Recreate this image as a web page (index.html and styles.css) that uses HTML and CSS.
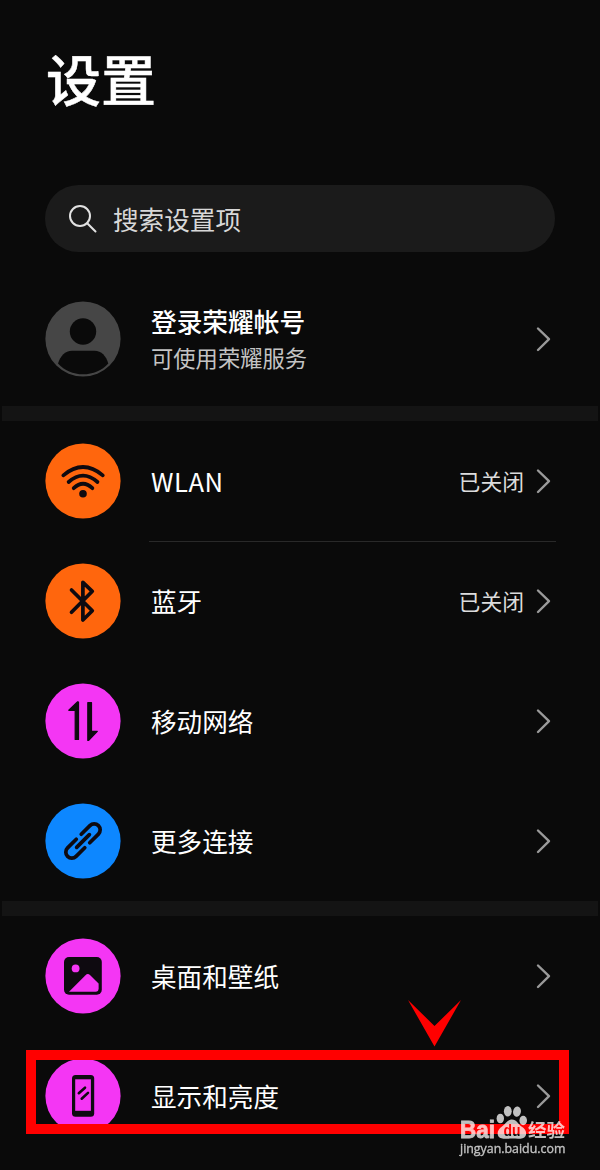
FILE: index.html
```html
<!DOCTYPE html>
<html lang="zh-CN">

<head>
  <meta charset="UTF-8">
  <meta name="viewport" content="width=device-width, initial-scale=1.0">
  <title>设置</title>
  <link rel="stylesheet" href="styles.css">
</head>

<body>
  <svg class="sprite">
    <symbol id="arrow" viewBox="0 0 16 26">
      <path d="M2 2.500l11 10.700L2 24" fill="none" stroke="currentColor" stroke-width="2.4" stroke-linecap="round" stroke-linejoin="round" />
    </symbol>
  </svg>

  <main class="settings">
    <h1>设置</h1>

    <div class="search">
      <svg class="search-icon" viewBox="0 0 30 30">
        <circle cx="12" cy="12" r="10" />
        <path d="M19.2 19.2l8.3 8.3" />
      </svg>
      <span>搜索设置项</span>
    </div>

    <section class="account">
      <svg class="icon gray" viewBox="0 0 76 76">
        <circle class="disc" cx="38" cy="38" r="37.6" />
        <circle cx="38" cy="30.5" r="13.2" />
        <path d="M13 62.5C15.500 55 20 49.800 27 49.800H49.500C56.500 49.800 61 55 63.300 62.500C57 69.700 48 73.300 38 73.300S19.500 69.700 13 62.500z" />
      </svg>
      <div class="account-text">
        <h2>登录荣耀帐号</h2>
        <p>可使用荣耀服务</p>
      </div>
      <svg class="arrow"><use href="#arrow" /></svg>
    </section>

    <section class="group">
      <div class="row line">
        <svg class="icon orange" viewBox="0 0 76 76">
          <circle class="disc" cx="38" cy="38" r="37.6" />
          <g class="stroke">
            <path d="M18.300 32.300Q38 15.700 57.800 32.300" />
            <path d="M23.600 39Q38 26.200 52.500 39" />
            <path d="M28.700 45.200Q38 36.400 47.400 45.200" />
          </g>
          <circle cx="38" cy="50.700" r="3.800" />
        </svg>
        <span class="name latin">WLAN</span>
        <span class="status">已关闭</span>
        <svg class="arrow"><use href="#arrow" /></svg>
      </div>
      <div class="row">
        <svg class="icon orange" viewBox="0 0 76 76">
          <circle class="disc" cx="38" cy="38" r="37.6" />
          <path class="stroke" d="M26.500 27L47.300 47.800L37.900 57V19.300L47.300 28.300L26.500 49.300" />
        </svg>
        <span class="name">蓝牙</span>
        <span class="status">已关闭</span>
        <svg class="arrow"><use href="#arrow" /></svg>
      </div>
      <div class="row">
        <svg class="icon pink" viewBox="0 0 76 76">
          <circle class="disc" cx="38" cy="38" r="37.6" />
          <path class="edge" d="M33.500 19V56.500H30.200V27.300H23.800L32.700 18.800z" />
          <path class="edge" d="M42.800 57.500V19.700H46.500V48.300H52.300L43.500 57.500z" />
        </svg>
        <span class="name">移动网络</span>
        <svg class="arrow"><use href="#arrow" /></svg>
      </div>
      <div class="row">
        <svg class="icon blue" viewBox="0 0 76 76">
          <circle class="disc" cx="38" cy="38" r="37.6" />
          <g class="stroke" transform="translate(38 38) rotate(-45)">
            <path d="M3.500 -6H15.800a6 6 0 0 1 0 12H3.500" />
            <path d="M-3.500 -6H-15.800a6 6 0 0 0 0 12H-3.500" />
            <path d="M-9 0H9" />
          </g>
        </svg>
        <span class="name">更多连接</span>
        <svg class="arrow"><use href="#arrow" /></svg>
      </div>
    </section>

    <section class="group">
      <div class="row">
        <svg class="icon pink" viewBox="0 0 76 76">
          <circle class="disc" cx="38" cy="38" r="37.6" />
          <rect x="19" y="19" width="37.800" height="37.800" rx="5" />
          <circle class="disc" cx="30.600" cy="30.400" r="3.900" />
          <path class="disc" d="M24 53.700L40.500 37.200Q42.800 35 45.200 37.200L53.600 45.500V50.500Q53.600 53.700 50.500 53.700z" />
        </svg>
        <span class="name">桌面和壁纸</span>
        <svg class="arrow"><use href="#arrow" /></svg>
      </div>
      <div class="row marked">
        <svg class="icon pink" viewBox="0 0 76 76">
          <circle class="disc" cx="38" cy="38" r="37.6" />
          <rect x="27" y="17" width="22.200" height="41.800" rx="3.500" />
          <rect class="disc" x="30.200" y="21.300" width="15.700" height="31.500" />
          <path class="stroke thin" d="M33.800 35.200L40 29.700M36.700 40.700L43 34.900" />
        </svg>
        <span class="name">显示和亮度</span>
        <svg class="arrow"><use href="#arrow" /></svg>
        <div class="frame"></div>
        <svg class="pointer" viewBox="0 0 54 47">
          <path d="M0 0L26.500 26L53 0L26.500 46.500z" />
        </svg>
      </div>
    </section>

    <div class="watermark">
      <svg viewBox="0 0 108 36">
        <mask id="du">
          <rect width="108" height="36" fill="#fff" />
          <text x="43.500" y="30" class="du" textLength="17" lengthAdjust="spacingAndGlyphs">du</text>
        </mask>
        <text x="0" y="32.300" class="bai" textLength="35" lengthAdjust="spacingAndGlyphs">Bai</text>
        <ellipse cx="40.300" cy="12.500" rx="3.700" ry="4.800" />
        <ellipse cx="47.800" cy="5.300" rx="3.900" ry="5.200" />
        <ellipse cx="57" cy="5.600" rx="3.900" ry="5.200" transform="rotate(10 57 5.600)" />
        <ellipse cx="63.200" cy="14.500" rx="3.800" ry="4.700" />
        <path mask="url(#du)" d="M52 13.500C56.500 13.500 58 18 61.500 20.500C66 23.500 67 26.500 65.500 30C63.500 33.800 57 32.600 52 32.600S41 33.800 38.500 30.500C36.500 27 38 23.500 42 20.500C45.500 18 47.500 13.500 52 13.500z" />
        <text x="68" y="31" class="jing" textLength="37" lengthAdjust="spacingAndGlyphs">经验</text>
      </svg>
      <span>jingyan.baidu.com</span>
    </div>
  </main>
</body>

</html>
```
FILE: styles.css
```css
* {
  box-sizing: border-box;
}

body {
  margin: 0;
  background-color: #0a0a0a;
  color: #fff;
  font-family: "Noto Sans CJK SC", sans-serif;
}

h1,
h2,
p {
  margin: 0;
  font-weight: 500;
}

.sprite {
  display: none;
}

.settings {
  position: relative;
  width: 600px;
  height: 1170px;
  padding-top: 37px;
  overflow: hidden;
}

h1 {
  height: 148px;
  padding-left: 46px;
  font-size: 55px;
  line-height: 80px;
  -webkit-text-stroke: 0.5px #fff;
}

.search {
  display: flex;
  align-items: center;
  gap: 15px;
  height: 67px;
  margin: 0 45px;
  padding: 0 0 0 23px;
  border-radius: 34px;
  background-color: #1b1b1b;
  color: #d8d8d8;
  font-size: 25.6px;
}

.search-icon {
  width: 30px;
  height: 30px;
  fill: none;
  stroke: #e2e2e2;
  stroke-width: 2;
  stroke-linecap: round;
}

.account,
.row {
  display: flex;
  align-items: center;
  padding: 0 48px 0 45px;
}

.account {
  height: 135px;
  margin-top: 19px;
}

.account-text {
  flex: 1;
  margin-left: 30px;
}

.account h2 {
  font-size: 25.7px;
  line-height: 36px;
}

.account p {
  color: #c4c4c4;
  font-size: 22.3px;
  font-weight: 400;
  line-height: 36px;
}

.group::before {
  content: "";
  display: block;
  height: 15px;
  margin: 0 2px;
  background-color: #141414;
}

.row {
  position: relative;
  height: 120px;
}

.line::after {
  content: "";
  position: absolute;
  left: 149px;
  right: 44px;
  bottom: -1px;
  height: 1px;
  background-color: #292929;
}

.icon {
  width: 76px;
  height: 76px;
  fill: #0e0a10;
}

.disc {
  fill: currentColor;
}

.stroke {
  fill: none;
  stroke: #0e0a10;
  stroke-width: 3.7;
  stroke-linecap: round;
  stroke-linejoin: round;
}

.thin {
  stroke-width: 2.6;
}

.edge {
  stroke: #0e0a10;
  stroke-width: 1.2;
  stroke-linejoin: round;
}

.gray {
  color: #464646;
  fill: #0a0a0a;
}

.orange {
  color: #ff660d;
}

.pink {
  color: #f436f4;
}

.blue {
  color: #0d87ff;
}

.name {
  flex: 1;
  margin-left: 30px;
  padding-bottom: 2px;
  font-size: 25.6px;
}

.latin {
  letter-spacing: 0.5px;
}

.status {
  margin-right: 12px;
  padding-bottom: 2px;
  color: #dcdcdc;
  font-size: 21.8px;
}

.arrow {
  width: 16px;
  height: 26px;
  color: #9a9a9a;
}

/* red highlight over the last row */
.frame {
  position: absolute;
  top: 14px;
  right: 31.5px;
  bottom: 22px;
  left: 26px;
  border: 10px solid #f00;
}

.pointer {
  position: absolute;
  top: -36px;
  left: 408px;
  width: 54px;
  height: 47px;
  fill: #f00;
}

.watermark {
  position: absolute;
  left: 460px;
  top: 1106px;
  width: 108px;
  opacity: 0.75;
}

.watermark svg {
  display: block;
  width: 108px;
  height: 36px;
  fill: #fff;
}

.watermark span {
  display: block;
  font-family: "Open Sans", sans-serif;
  font-size: 12.4px;
  line-height: 14px;
  -webkit-text-stroke: 0.3px #fff;
}

.bai,
.du {
  font-family: "Liberation Sans", sans-serif;
  font-weight: 700;
}

.bai {
  font-size: 23px;
  stroke: #fff;
  stroke-width: 0.8;
}

.du {
  font-size: 16px;
  fill: #000;
}

.jing {
  font-size: 18px;
  font-weight: 700;
}
```
